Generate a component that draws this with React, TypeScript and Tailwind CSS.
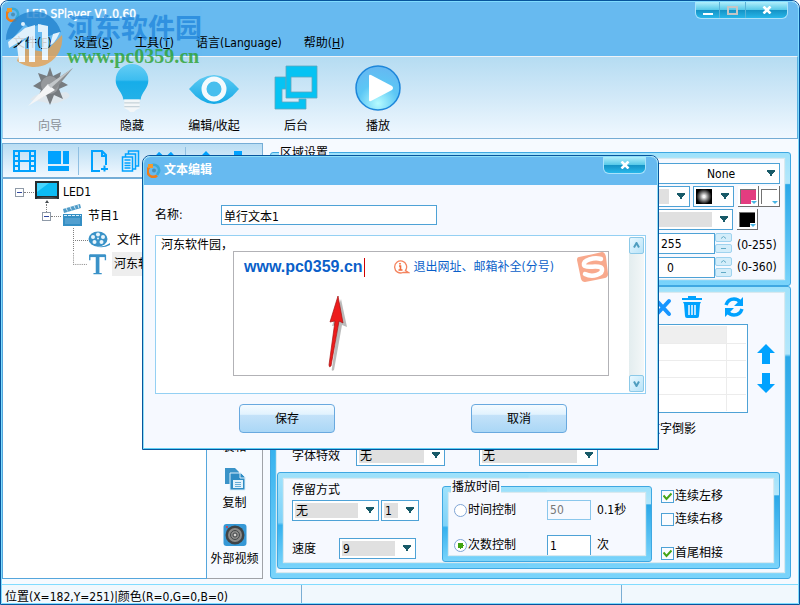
import { useState, type ReactNode } from "react";
import clsx from "clsx";

const MENUS: [string, string][] = [
  ["文件", "F"],
  ["设置", "S"],
  ["工具", "T"],
  ["语言", "Language"],
  ["帮助", "H"],
];

export default function App() {
  return (
    <div className="relative flex min-h-screen flex-col overflow-hidden rounded-t-lg border border-[#07559d] bg-[#f6faff] font-['DejaVu_Sans_Condensed','Noto_Sans_CJK_SC',sans-serif] text-[12px] leading-4 text-black">
      <div className="flex flex-1 flex-col rounded-t-lg border border-[#7fdcff]">
        <TitleBar />
        <Toolbar />
        <main className="flex flex-1 gap-[7px] pt-1 pr-[7px] pb-[5px]">
          <LeftPane />
          <div className="flex min-w-0 flex-1 flex-col pt-[9px]">
            <RegionSettings />
            <ContentSettings />
          </div>
        </main>
        <StatusBar />
      </div>
      <Watermark />
      <TextDialog />
    </div>
  );
}

function TitleBar() {
  return (
    <header className="rounded-t-md bg-[#67baf0]">
      <div className="flex h-[30px] items-start">
        <div className="flex items-center gap-[6px] pt-1 pl-1">
          <AppLogo />
          <h1 className="text-[12px] font-medium text-white [text-shadow:0_0_1px_#fff]">LED SPlayer V1.0.60</h1>
        </div>
        <div className="mr-[10px] ml-auto flex h-[17px] rounded-b-md border border-t-0 border-[#a9e2fb] bg-[linear-gradient(to_bottom,#b0eefb_0%,#55c8e8_50%,#1593c6_52%,#27b7ea_100%)]">
          <button aria-label="最小化" className="flex w-6 items-end justify-center border-r border-[#5ab3d8] pb-[3px]">
            <span className="h-[2px] w-[10px] bg-white" />
          </button>
          <button aria-label="最大化" className="flex w-[26px] items-center justify-center border-r border-[#5ab3d8]">
            <span className="h-[9px] w-[11px] border-2 border-[#c5c5c5]" />
          </button>
          <button aria-label="关闭" className="flex w-[41px] items-center justify-center">
            <CrossIcon />
          </button>
        </div>
      </div>
      <nav className="flex h-6 items-start gap-[22px] pt-[3px] pl-[11px]">
        {MENUS.map(([text, key]) => (
          <button key={text}>
            {text}({key.length === 1 ? <u>{key}</u> : key})
          </button>
        ))}
      </nav>
    </header>
  );
}

function Toolbar() {
  const items: { text: string; icon: ReactNode; disabled?: boolean }[] = [
    { text: "向导", icon: <CompassIcon />, disabled: true },
    { text: "隐藏", icon: <BulbIcon /> },
    { text: "编辑/收起", icon: <EyeIcon /> },
    { text: "后台", icon: <WindowsIcon /> },
    { text: "播放", icon: <PlayIcon /> },
  ];
  return (
    <div className="flex h-[83px] border border-t-[#eef3f8] border-r-[#5bb0e0] border-b-[#74acd4] border-l-[#9ccdec] bg-linear-to-b from-[#b5dcf2] via-[#d2e9f8] to-[#f0f8ff] pl-[6px]">
      {items.map((item) => (
        <button
          key={item.text}
          disabled={item.disabled}
          className="flex w-[82px] flex-col items-center justify-end gap-[6px] pb-1 disabled:text-[#8a8f96]"
        >
          {item.icon}
          <span>{item.text}</span>
        </button>
      ))}
    </div>
  );
}

function LeftPane() {
  return (
    <div className="flex w-[261px] shrink-0 flex-col">
      <div className="flex h-9 items-center border border-b-2 border-[#75add6] bg-linear-to-b from-[#b9ddf3] to-[#f1f8ff] text-[#00a2ff]">
        <button aria-label="节目" className="ml-[10px]">
          <FilmIcon />
        </button>
        <button aria-label="布局" className="ml-3">
          <LayoutIcon />
        </button>
        <span className="mr-[11px] ml-[9px] h-7 border-r border-[#8fbfe2]" />
        <button aria-label="新建">
          <NewFileIcon />
        </button>
        <button aria-label="复制页" className="ml-3">
          <PagesIcon />
        </button>
        <button aria-label="删除" className="ml-[14px]">
          <svg width="22" height="18" viewBox="0 0 22 18" fill="none" stroke="currentColor" strokeWidth="6">
            <path d="M3 2l16 15M19 2L3 17" />
          </svg>
        </button>
        <span className="mr-[11px] ml-[9px] h-7 border-r border-[#8fbfe2]" />
        <button aria-label="上移">
          <ArrowIcon />
        </button>
        <button aria-label="下移" className="ml-[14px] rotate-180">
          <ArrowIcon />
        </button>
      </div>
      <div className="flex flex-1">
        <ul className="flex-1 overflow-hidden border border-t-0 border-[#55a6dc] bg-white pt-[1px] whitespace-nowrap">
          <li className="flex h-6 items-center pl-3">
            <Expander />
            <Dots />
            <MonitorIcon />
            <span className="ml-1">LED1</span>
          </li>
          <li className="flex h-6 items-center pl-[39px]">
            <Expander child />
            <Dots />
            <ClapperIcon />
            <span className="ml-[5px]">节目1</span>
          </li>
          <li className="flex h-6 items-center pl-[70px]">
            <Branch />
            <ReelIcon />
            <span className="ml-[6px]">文件</span>
          </li>
          <li className="flex h-6 items-center pl-[70px]">
            <Branch last />
            <LetterIcon />
            <span className="ml-1 flex h-6 items-center bg-[#eeeeee] pr-8 pl-[2px]">河东软件园</span>
          </li>
        </ul>
        <div className="flex w-14 flex-col justify-end gap-3 border-r border-b border-[#a0a3a8] pb-[11px] text-center whitespace-nowrap">
          <button>装箱</button>
          <button className="flex flex-col items-center gap-1">
            <CopyIcon />
            复制
          </button>
          <button className="flex flex-col items-center gap-1">
            <CameraIcon />
            外部视频
          </button>
        </div>
      </div>
    </div>
  );
}

function Frame({ title, className, children }: { title?: string; className?: string; children: ReactNode }) {
  return (
    <section
      className={clsx(
        "relative rounded-[3px] border border-[#3fa8e2] [background:linear-gradient(to_bottom,#a0e2fb_0%,#7fd2f8_52%,#35b1ee_55%,#7ad4fb_100%)_left/50%_100%_no-repeat,linear-gradient(to_bottom,#a0e2fb_0%,#b4e7fb_23%,#2ba8e8_24%,#7ad4fb_100%)] p-[6px]",
        className
      )}
    >
      {title && <h2 className="absolute -top-2 left-2 bg-[#f6f9ff] px-[1px]">{title}</h2>}
      <div className="h-full bg-[#f6f9ff] shadow-[0_0_1px_1px_#d9e9ef]">{children}</div>
    </section>
  );
}

function Combo({
  id,
  label,
  value,
  plain,
  className,
  children,
}: {
  id?: string;
  label?: string;
  value: string;
  plain?: boolean;
  className?: string;
  children?: ReactNode;
}) {
  return (
    <div className={clsx("relative flex h-[21px] border border-[#4ea2d6] bg-white", className)}>
      <select
        id={id}
        aria-label={label}
        defaultValue={value}
        className={clsx("m-[2px] mr-5 min-w-0 flex-1 appearance-none", plain ? "pl-[84px] text-left" : "bg-[#e0e0e0] pl-[1px]")}
      >
        <option>{value}</option>
      </select>
      {children}
      <svg className="pointer-events-none absolute top-[6px] right-1" width="8" height="6" viewBox="0 0 8 6" fill="#185a68">
        <path d="M0 0h8v2H7v1H6v1H5v2H3V4H2V3H1V2H0z" />
      </svg>
    </div>
  );
}

function Spinner() {
  return (
    <div className="flex w-[17px] flex-col gap-[2px]">
      {["增加", "减少"].map((text, i) => (
        <button key={text} aria-label={text} className="flex h-[9px] items-center justify-center rounded-[2px] border border-[#9fd3ef] bg-[#d3edfa]">
          <svg width="5" height="3" viewBox="0 0 5 3" fill="none" stroke="#62aac6">
            <path d={i === 0 ? "M0 2.500L2.500 .5L5 2.500" : "M0 1.500h5"} />
          </svg>
        </button>
      ))}
    </div>
  );
}

function ColorButton({ label, fill }: { label: string; fill: string }) {
  return (
    <button aria-label={label} className="relative h-[21px] w-[21px] border-r border-b border-[#6f6f6f] bg-white p-[2px]">
      <span className={clsx("block h-[15px] w-[16px] border-t border-l border-[#737373]", fill)} />
      <svg className="absolute right-[1px] bottom-[1px]" width="6" height="5" viewBox="0 0 6 5">
        <path d="M0 0h6v5H0z" fill="#fff" />
        <path d="M0 1h6L3 4z" fill="#46b4e4" />
      </svg>
    </button>
  );
}

function RegionSettings() {
  return (
    <Frame title="区域设置" className="h-[134px]">
      <div className="ml-auto flex w-[164px] flex-col gap-[2px] pt-1 pr-1">
        <Combo label="边框" value="None" plain />
        <div className="flex gap-[3px]">
          <Combo label="速度" value=" " className="flex-1" />
          <div className="relative flex h-[21px] w-[41px] border border-[#4ea2d6] bg-white">
            <select aria-label="效果" className="w-full appearance-none" />
            <span className="pointer-events-none absolute top-[2px] left-[2px] h-[15px] w-4 bg-[radial-gradient(circle,#f5f5f5_10%,#8b8b8b_35%,#000_70%)]" />
            <svg className="pointer-events-none absolute top-[6px] right-1" width="8" height="6" viewBox="0 0 8 6" fill="#185a68">
              <path d="M0 0h8v2H7v1H6v1H5v2H3V4H2V3H1V2H0z" />
            </svg>
          </div>
          <div className="flex pl-[1px]">
            <ColorButton label="颜色" fill="bg-[#e33c80]" />
            <ColorButton label="背景色" fill="bg-white" />
          </div>
        </div>
        <div className="flex gap-1">
          <Combo label="样式" value=" " className="flex-1" />
          <div className="w-[43px]">
            <ColorButton label="边框色" fill="bg-black" />
          </div>
        </div>
        <div className="flex">
          <input aria-label="透明度" defaultValue="255" className="h-[21px] min-w-0 flex-1 border border-[#4ea2d6] bg-white pl-10" />
          <Spinner />
          <span className="w-12 pt-1 pl-[5px]">(0-255)</span>
        </div>
        <div className="flex pt-[1px]">
          <input aria-label="角度" defaultValue="0" className="h-[21px] min-w-0 flex-1 border border-[#4ea2d6] bg-white pl-[46px]" />
          <Spinner />
          <span className="w-12 pt-[2px] pl-[5px]">(0-360)</span>
        </div>
      </div>
    </Frame>
  );
}

function ContentSettings() {
  const [timing, setTiming] = useState("count");
  return (
    <Frame className="flex-1">
      <div className="flex h-[27px] items-start justify-end gap-[10px] pt-[3px] pr-10 text-[#00a2ff]">
        <button aria-label="删除">
          <svg width="18" height="24" viewBox="0 0 18 24" fill="none" stroke="#1795ff" strokeWidth="4" strokeLinecap="round">
            <path d="M3 5l12 13M15 5L3 18" />
          </svg>
        </button>
        <button aria-label="清空">
          <TrashIcon />
        </button>
        <button aria-label="刷新" className="ml-3">
          <RefreshIcon />
        </button>
      </div>
      <div className="mt-1 flex items-center gap-[9px] pr-[9px] pl-2">
        <div className="flex-1 border border-[#4ea2d6] bg-white p-[1px]">
          <table aria-label="文件列表" className="w-full border-collapse">
            <tbody>
              {[0, 1, 2, 3, 4].map((row) => (
                <tr key={row} className="h-[17px] border-b border-[#ececec] last:border-b-0">
                  <td className={clsx("border-r border-[#ececec]", row === 0 && "bg-[#efefef]")} />
                  <td className="w-5" />
                </tr>
              ))}
            </tbody>
          </table>
        </div>
        <div className="flex flex-col gap-[9px] text-[#00a2ff]">
          <button aria-label="上移一行">
            <ArrowIcon />
          </button>
          <button aria-label="下移一行" className="rotate-180">
            <ArrowIcon />
          </button>
        </div>
      </div>
      <div className="flex h-8 items-center justify-end pr-[88px]">文字倒影</div>
      <div className="flex items-center pl-[15px]">
        <label htmlFor="effect" className="w-16">字体特效</label>
        <Combo id="effect" value="无" className="w-[89px]" />
        <Combo label="特效方向" value="无" className="ml-[34px] w-[119px]" />
      </div>
      <Frame className="mt-[6px] mr-1">
        <div className="flex h-[83px] pl-2">
          <div className="w-[127px] pt-[3px]">
            <label htmlFor="stay" className="block">停留方式</label>
            <div className="mt-[2px] flex gap-[2px]">
              <Combo id="stay" value="无" className="w-[87px]" />
              <Combo label="停留时间" value="1" className="w-[38px]" />
            </div>
            <div className="mt-[17px] flex items-center">
              <label htmlFor="speed" className="w-[47px]">速度</label>
              <Combo id="speed" value="9" className="w-[77px]" />
            </div>
          </div>
          <Frame title="播放时间" className="mt-[7px] ml-[23px] h-[76px] w-[210px]">
            <div className="flex flex-col gap-[15px] pt-[7px] pl-[5px]">
              <div className="flex h-5 items-center">
                <Radio label="时间控制" checked={timing === "time"} onChange={() => setTiming("time")} />
                <input aria-label="时间" defaultValue="50" disabled={timing !== "time"} className="mr-[6px] ml-[31px] h-5 w-11 border border-[#8ac7ec] bg-[#f6f9ff] pl-[2px] text-[#777]" />
                0.1秒
              </div>
              <div className="flex h-5 items-center">
                <Radio label="次数控制" checked={timing === "count"} onChange={() => setTiming("count")} />
                <input aria-label="次数" defaultValue="1" className="mr-[6px] ml-[31px] h-5 w-11 border border-b-0 border-[#4ea2d6] bg-white pl-[2px]" />
                次
              </div>
            </div>
          </Frame>
          <div className="ml-[9px] flex flex-col pt-[9px] whitespace-nowrap">
            <Check label="连续左移" on />
            <Check label="连续右移" className="mt-[7px]" />
            <Check label="首尾相接" on className="mt-[18px]" />
          </div>
        </div>
      </Frame>
    </Frame>
  );
}

function Radio({ label, checked, onChange }: { label: string; checked: boolean; onChange: () => void }) {
  return (
    <label className="flex items-center gap-[1px] whitespace-nowrap">
      <input
        type="radio"
        name="timing"
        checked={checked}
        onChange={onChange}
        className="h-[13px] w-[13px] appearance-none rounded-full border border-[#7fa5d5] bg-white checked:bg-[radial-gradient(circle,#3fa311_0,#3fa311_3px,#fff_3px)]"
      />
      {label}
    </label>
  );
}

function Check({ label, on, className }: { label: string; on?: boolean; className?: string }) {
  return (
    <label className={clsx("relative flex items-center gap-[1px]", className)}>
      <input type="checkbox" defaultChecked={on} className="peer h-[13px] w-[13px] appearance-none border border-[#4ea2d6] bg-[#fafcff]" />
      <svg className="pointer-events-none absolute left-[2px] hidden peer-checked:block" width="9" height="9" viewBox="0 0 9 9" fill="none" stroke="#46a516" strokeWidth="2">
        <path d="M.5 3.500L3.500 7L8.500 1.500" />
      </svg>
      {label}
    </label>
  );
}

function StatusBar() {
  return (
    <footer className="flex h-[19px] overflow-hidden border-t border-[#82dcff] bg-[#f1f8fd] whitespace-nowrap">
      <span className="w-[300px] border-r border-[#7aaed4] pt-1 pl-[3px]">位置(X=182,Y=251)|颜色(R=0,G=0,B=0)</span>
      <span className="w-[320px] border-r border-[#7aaed4]" />
    </footer>
  );
}

function TextDialog() {
  return (
    <div role="dialog" aria-label="文本编辑" className="absolute top-[154px] left-[141px] w-[517px] rounded-t-lg border border-[#07559d] bg-[#f6f9ff]">
      <div className="rounded-t-lg border border-t-[#8edff8] border-r-[#8edff8] border-b-[#5fd0f5] border-l-[#8edff8]">
        <div className="flex h-7 items-start rounded-t-md bg-[#67baf0] pl-[3px]">
          <div className="flex items-center gap-[3px] pt-[5px]">
            <AppLogo />
            <h2 className="font-bold text-white">文本编辑</h2>
          </div>
          <button aria-label="关闭对话框" className="mr-[11px] ml-auto flex h-[17px] w-[43px] items-center justify-center rounded-b-md border border-t-0 border-[#a9e2fb] bg-[linear-gradient(to_bottom,#b0eefb_0%,#55c8e8_50%,#1593c6_52%,#27b7ea_100%)]">
            <CrossIcon />
          </button>
        </div>
        <div className="px-[11px] pt-5 pb-[15px]">
          <div className="flex items-center">
            <label htmlFor="name" className="w-[66px]">名称:</label>
            <input id="name" defaultValue="单行文本1" className="h-5 w-[216px] border border-[#4ea2d6] bg-white pl-[2px]" />
          </div>
          <div className="relative mt-[10px] flex h-[159px] border border-[#94d0f3] bg-white">
            <textarea aria-label="文本内容" defaultValue="河东软件园，" className="flex-1 resize-none overflow-hidden pt-[1px] pl-[5px] outline-none" />
            <div className="m-[1px] flex w-[15px] flex-col justify-between bg-linear-to-r from-[#e3edef] to-[#f3f7f8]">
              <ScrollButton label="向上滚动" d="M1 5.500L3.500 1L6 5.500" />
              <ScrollButton label="向下滚动" d="M1 1.500L3.500 6L6 1.500" />
            </div>
            <Suggestions />
          </div>
          <div className="mt-[10px] flex gap-[136px] pl-[84px]">
            <DialogButton>保存</DialogButton>
            <DialogButton>取消</DialogButton>
          </div>
        </div>
      </div>
    </div>
  );
}

function Suggestions() {
  return (
    <div className="absolute top-[15px] left-[77px] h-[125px] w-[376px] border border-[#b2b2b6] bg-white">
      <div className="flex h-[30px] items-center pl-[10px]">
        <span className="font-['Liberation_Sans',sans-serif] text-[16px] font-bold text-[#0a5fc9]">www.pc0359.cn</span>
        <span className="ml-[1px] h-[19px] border-r border-[#d00000]" />
        <svg className="mr-1 ml-7" width="17" height="14" viewBox="0 0 17 14" fill="none" stroke="#f4845f" strokeWidth="1.300">
          <path d="M12.500 10.500A6 6 0 1 0 10 12.500h5.500l-3-2z" />
          <path d="M6 6h1.500v4M5.500 10h4M7 3v1.500" stroke="#f26b3c" strokeWidth="1.600" />
        </svg>
        <span className="whitespace-nowrap text-[#0a5fc9]">退出网址、邮箱补全(分号)</span>
      </div>
      <svg className="absolute top-0 right-0" width="32" height="31" viewBox="0 0 32 31">
        <path d="M3 5Q14 3 26 0Q29 0 30 5L32 22Q32 25 29 26Q20 28 9 30Q6 30 5 27L1 8Q1 5 3 5z" fill="#f8a98d" />
        <path d="M25 7C18 5 7 8 8 13C9 17 25 12 26 17C27 22 17 26 9 22" fill="none" stroke="#fff" strokeWidth="4.500" strokeLinecap="round" />
      </svg>
      <svg className="absolute top-[43px] left-[91px]" width="26" height="76" viewBox="0 0 26 76">
        <path d="M14 2L20 30L15 28L7 73Q4 75 5 71L11 28L5 29z" fill="#777" opacity=".5" transform="translate(2 2)" />
        <path d="M13 1L18 28L14 26L6 71Q4 73 4 70L10 26L5 27z" fill="#ed1c1c" stroke="#a51313" strokeWidth=".7" />
      </svg>
    </div>
  );
}

function ScrollButton({ label, d }: { label: string; d: string }) {
  return (
    <button aria-label={label} className="flex h-[17px] items-center justify-center rounded-[2px] border border-[#8cc9e8] bg-linear-to-br from-[#e8f8ff] to-[#b8e3f8]">
      <svg width="7" height="7" viewBox="0 0 7 7" fill="none" stroke="#4f9dbf" strokeWidth="2">
        <path d={d} />
      </svg>
    </button>
  );
}

function DialogButton({ children }: { children: ReactNode }) {
  return (
    <button className="h-[29px] w-24 rounded-[4px] border border-[#69a9df] bg-[linear-gradient(to_bottom,#f5fbff_0%,#e1f2fe_35%,#c4e2f9_36%,#aad7f6_100%)]">
      {children}
    </button>
  );
}

function Watermark() {
  return (
    <div className="pointer-events-none absolute top-[9px] left-[4px] flex items-start gap-1 whitespace-nowrap opacity-80">
      <svg width="58" height="58" viewBox="0 0 58 58">
        <path d="M1 30A28 28 0 0 1 56 22L38 28L36 14L24 18L20 14L8 28z" fill="#2384cf" />
        <path d="M57 25A28 28 0 0 1 12 51L16 38L40 42L48 34z" fill="#e7a152" />
        <path d="M3 32L20 18L30 15V52H24V26L4 38zM33 14L43 16V50H37V22H33zM12 36L20 30V52H14zM48 24L55 22Q49 35 45 35z" fill="#fff" />
        <circle cx="18" cy="14" r="2" fill="#fff" />
      </svg>
      <div className="flex flex-col">
        <span className="pt-[3px] pb-[1px] font-['Noto_Sans_CJK_SC',sans-serif] text-[27px] leading-7 font-bold text-[#2388dc]">河东软件园</span>
        <span className="pt-1 font-['Liberation_Serif',serif] text-[20px] leading-5 font-bold text-[#2ca22f]">www.pc0359.cn</span>
      </div>
    </div>
  );
}

function Expander({ child }: { child?: boolean }) {
  return (
    <button
      aria-label="折叠"
      className={clsx(
        "relative flex h-[9px] w-[9px] items-center justify-center border border-[#8f9aa8] bg-white",
        child && "before:absolute before:bottom-2 before:left-[3px] before:h-2 before:border-l before:border-dotted before:border-[#808080]"
      )}
    >
      <span className="h-[1px] w-[5px] bg-[#30479e]" />
    </button>
  );
}

function Dots() {
  return <span className="mr-[1px] w-[10px] border-t border-dotted border-[#808080]" />;
}

function Branch({ last }: { last?: boolean }) {
  return (
    <svg width="15" height="24" viewBox="0 0 15 24" fill="none" stroke="#808080" strokeDasharray="1 1">
      <path d={last ? "M.5 0v12" : "M.5 0v24"} />
      <path d="M0 12.500h15" />
    </svg>
  );
}

function AppLogo() {
  return (
    <svg width="14" height="15" viewBox="0 0 14 15" fill="none" strokeWidth="2.600">
      <path d="M10 12.500A5.200 5.200 0 0 1 2.500 4" stroke="#ef7d1a" />
      <path d="M5 2A5.500 5.500 0 0 1 12 8.500L10 12" stroke="#3aa9d8" />
      <path d="M1 1h5v4H1z" fill="#f39a2c" />
      <circle cx="7" cy="7.500" r="2" fill="#4a91b8" />
    </svg>
  );
}

function CrossIcon() {
  return (
    <svg width="10" height="8" viewBox="0 0 10 8" fill="none" stroke="#fff" strokeWidth="2.600">
      <path d="M1.500 .5L8.500 7.500M8.500 .5L1.500 7.500" />
    </svg>
  );
}

function CompassIcon() {
  return (
    <svg width="48" height="48" viewBox="0 0 48 48">
      <path d="M4 36Q10 28 20 31L40 28Q48 32 38 36Q28 42 17 38z" fill="#dfe7ed" />
      <path d="M24 3l3 9 8-4-2 8 9 5-9 4 4 10-9-4-4 10-4-10-9 5 4-10-8-4 8-5-3-8 9 3z" fill="#777c80" />
      <circle cx="24" cy="21" r="9" fill="#96999c" />
      <path d="M47 4L28 27L22 21z" fill="#8a8d90" />
      <path d="M2 42L22 20L29 26z" fill="#f4f5f6" />
      <path d="M47 4L25 24L22 21z" fill="#c3c7ca" />
    </svg>
  );
}

function BulbIcon() {
  return (
    <svg width="36" height="50" viewBox="0 0 36 52">
      <defs>
        <linearGradient id="bulb" x2="0" y2="1">
          <stop stopColor="#65cdf4" />
          <stop offset=".45" stopColor="#3dbdf0" />
          <stop offset=".5" stopColor="#16ade9" />
          <stop offset="1" stopColor="#23b1e8" />
        </linearGradient>
      </defs>
      <path d="M18 2A17 17 0 0 1 35 19C35 28 28 31 27 39H9C8 31 1 28 1 19A17 17 0 0 1 18 2z" fill="url(#bulb)" />
      <path d="M10 39h16v9l-4 2-2 2h-4l-2-2-4-2z" fill="#f2f6f8" />
      <path d="M10 42.500h16M10 46.500h16" stroke="#b9c8d0" />
    </svg>
  );
}

function EyeIcon() {
  return (
    <svg width="50" height="48" viewBox="0 0 50 48">
      <defs>
        <linearGradient id="eye" x2="0" y2="1">
          <stop stopColor="#60cbf3" />
          <stop offset="1" stopColor="#13a9e6" />
        </linearGradient>
      </defs>
      <path d="M0 25Q12 11 25 11Q38 11 50 25Q38 40 25 40Q12 40 0 25z" fill="url(#eye)" />
      <circle cx="25" cy="25" r="10" fill="#48bfee" stroke="#f4fafd" strokeWidth="5" />
    </svg>
  );
}

function WindowsIcon() {
  return (
    <svg width="44" height="48" viewBox="0 0 44 48">
      <g fill="#06c3f3" stroke="#61a4bd" strokeWidth=".8" fillRule="evenodd">
        <path d="M1 13h11v12H8v13h17v-3h7v10H1z" />
        <path d="M12 2h31v32H12zM17 13v15h21V13z" />
      </g>
    </svg>
  );
}

function PlayIcon() {
  return (
    <svg width="48" height="49" viewBox="0 0 48 49">
      <defs>
        <radialGradient id="play" cy=".85" r=".9">
          <stop stopColor="#b5fbff" />
          <stop offset=".5" stopColor="#5cc7f5" />
          <stop offset="1" stopColor="#67b5f1" />
        </radialGradient>
      </defs>
      <circle cx="24" cy="25" r="22" fill="url(#play)" stroke="#1d86da" strokeWidth="1.500" />
      <path d="M15 13Q15 11 17 12L38 23Q40 25 38 27L17 38Q15 39 15 37z" fill="#fff" />
    </svg>
  );
}

function FilmIcon() {
  return (
    <svg width="23" height="22" viewBox="0 0 23 22" fill="none" stroke="currentColor" strokeWidth="2">
      <path d="M1 1h21v20H1zM6 1v20M17 1v20M6 11h11M1 6h5M1 11h5M1 16h5M17 6h5M17 11h5M17 16h5" />
    </svg>
  );
}

function LayoutIcon() {
  return (
    <svg width="21" height="20" viewBox="0 0 21 20" fill="currentColor">
      <path d="M0 0h13v13H0zM15 0h6v13h-6zM0 15h21v5H0z" />
    </svg>
  );
}

function NewFileIcon() {
  return (
    <svg width="19" height="22" viewBox="0 0 19 22" fill="none" stroke="currentColor" strokeWidth="2">
      <path d="M10 21H2V1h10l4 4v10M12 1v5h4M11 19h7M14.500 15.500v6" />
    </svg>
  );
}

function PagesIcon() {
  return (
    <svg width="19" height="22" viewBox="0 0 18 22" fill="none" stroke="currentColor" strokeWidth="1.500">
      <path d="M1 7h10v14H1zM4 7V4h10v15h-3M7 4V1h10v15h-3M3 10h6M3 13h6M3 15.500h6M3 18h6" />
    </svg>
  );
}

function ArrowIcon() {
  return (
    <svg width="18" height="20" viewBox="0 0 18 20" fill="currentColor">
      <path d="M9 0L18 9H13V20H5V9H0z" />
    </svg>
  );
}

function MonitorIcon() {
  return (
    <svg width="24" height="24" viewBox="0 0 24 24">
      <path d="M0 1h24v18H0z" fill="#252d31" />
      <path d="M2 3h20v13H2z" fill="#0dbcf5" />
      <path d="M2 3h12L2 12z" fill="#47d6ff" />
      <path d="M2 18l6-1h9l5 1v1H2zM12 20l2 3h-4z" fill="#464c50" />
    </svg>
  );
}

function ClapperIcon() {
  return (
    <svg width="21" height="24" viewBox="0 0 21 24">
      <path d="M1 10h19v12H1z" fill="#358fc4" />
      <path d="M3 14h15v6H3z" fill="#529fcf" />
      <path d="M1 5L18 0l1 4L2 9z" fill="#4f9bc7" />
      <path d="M4 4l2 4M8 3l2 4M12 2l2 4M16 1l1 4M2 11.500h17" stroke="#d9eefa" strokeDasharray="3 1" />
    </svg>
  );
}

function ReelIcon() {
  return (
    <svg width="23" height="18" viewBox="0 0 23 18">
      <ellipse cx="10" cy="8" rx="9.500" ry="7.500" fill="#3a93c8" />
      <path d="M6 15Q15 17 22 12V14Q15 18 6 15z" fill="#3a93c8" />
      <g fill="#e8f5fc">
        <circle cx="10" cy="3.500" r="2" />
        <circle cx="5" cy="6" r="2" />
        <circle cx="15" cy="6" r="2" />
        <circle cx="6.500" cy="11" r="2" />
        <circle cx="13.500" cy="11" r="2" />
        <circle cx="10" cy="7.500" r="1" />
      </g>
    </svg>
  );
}

function LetterIcon() {
  return (
    <svg width="23" height="24" viewBox="0 0 23 24" fill="none" stroke="#3a92c8">
      <path d="M3 3h17" strokeWidth="3" />
      <path d="M11.500 3v19" strokeWidth="4" />
      <path d="M3 2v6M20 2v6M7 22.500h9" strokeWidth="1.500" />
    </svg>
  );
}

function TrashIcon() {
  return (
    <svg width="20" height="22" viewBox="0 0 20 22" fill="currentColor">
      <path d="M0 2h6V0h8v2h6v2H0zM1 6h18l-1 2-1 12q0 2-2 2H5q-2 0-2-2L2 8z" />
      <path d="M7 9v10M10 9v10M13 9v10" stroke="#f6f9ff" strokeWidth="1.500" />
    </svg>
  );
}

function RefreshIcon() {
  return (
    <svg width="20" height="22" viewBox="0 0 20 22" fill="none" stroke="currentColor" strokeWidth="3.500">
      <path d="M2 9Q4 3 10 3Q14 3 16 6M18 13Q16 19 10 19Q6 19 4 16" />
      <path d="M19 1v9h-9zM1 21v-9h9z" fill="currentColor" stroke="none" />
    </svg>
  );
}

function CopyIcon() {
  return (
    <svg width="22" height="24" viewBox="0 0 22 24">
      <path d="M1 1h10l4 4v12H1z" fill="#3a93c8" />
      <path d="M6 6h11l4 4v13H6z" fill="#2f8cc4" stroke="#dceefa" />
      <path d="M9 13h10v8H9z" fill="#e3f2fb" />
      <path d="M11 15.500h6M11 17.500h6M11 19.500h6" stroke="#67acd6" />
      <path d="M16 5v6h6" fill="none" stroke="#dceefa" />
    </svg>
  );
}

function CameraIcon() {
  return (
    <svg width="24" height="24" viewBox="0 0 24 24">
      <rect x=".5" y="1" width="23" height="22" rx="3" fill="#3598d6" />
      <circle cx="12" cy="12" r="9.500" fill="#3f4346" />
      <circle cx="12" cy="12" r="7" fill="#8a8a88" />
      <circle cx="12" cy="12" r="4.500" fill="none" stroke="#44484a" />
      <circle cx="12" cy="12" r="2" fill="#d7d7d4" stroke="#3a3d40" />
      <circle cx="4" cy="4" r="1" fill="#e33" />
    </svg>
  );
}
